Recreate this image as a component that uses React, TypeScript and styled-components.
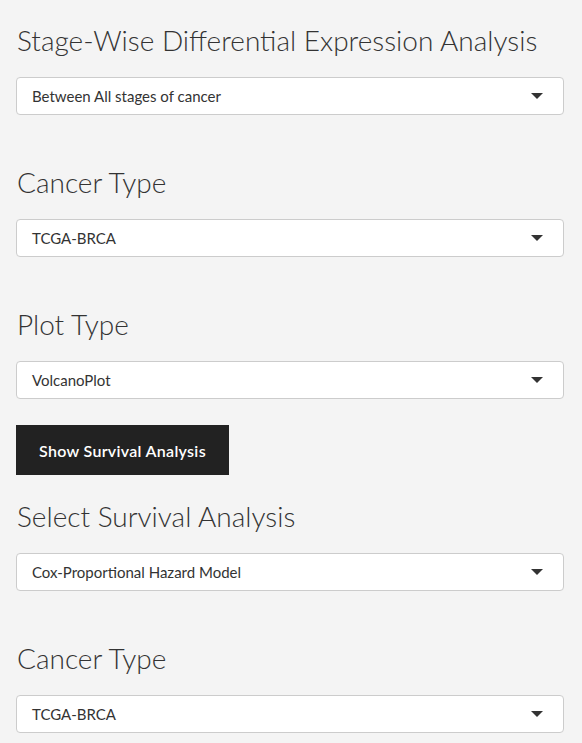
import React from 'react';
import styled, { createGlobalStyle } from 'styled-components';

const GlobalStyle = createGlobalStyle`
  html, body {
    margin: 0;
    padding: 0;
    background-color: #f4f4f4;
  }
  body {
    font-family: 'Lato', 'Noto Sans', sans-serif;
    color: #333;
  }
`;

const StyledPage = styled.div`
  width: 582px;
  box-sizing: border-box;
  padding: 0 18px 0 16px;
  display: flex;
  flex-direction: column;

  & > div:first-child h3 {
    margin-top: 23px;
  }
`;

const StyledTitle = styled.h3`
  font-family: 'Lato', 'Noto Sans', sans-serif;
  font-weight: 300;
  font-size: 28px;
  line-height: 35px;
  color: #333;
  white-space: nowrap;
  margin: 24px 0 19px 1px;
`;

const StyledSelect = styled.div`
  height: 38px;
  box-sizing: border-box;
  background-color: #fff;
  border: 1px solid #ccc;
  border-radius: 4px;
  display: flex;
  align-items: center;
  justify-content: space-between;
  padding: 0 20px 0 15px;
  font-size: 15px;
  color: #333;
`;

const StyledCaret = styled.span`
  width: 0;
  height: 0;
  border-left: 6px solid transparent;
  border-right: 6px solid transparent;
  border-top: 6px solid #333;
`;

const StyledSection = styled.div`
  display: flex;
  flex-direction: column;
  margin-bottom: 26px;
`;

const StyledButton = styled.button`
  align-self: flex-start;
  height: 50px;
  width: 213px;
  border: none;
  border-radius: 0;
  background-color: #222;
  color: #fff;
  font-family: 'Lato', 'Noto Sans', sans-serif;
  font-weight: 600;
  font-size: 16px;
  letter-spacing: 0.3px;
  margin: 0;
  padding: 0;
`;

const Select = ({ value }: { value: string }) => (
  <StyledSelect>
    <span>{value}</span>
    <StyledCaret />
  </StyledSelect>
);

const App = () => {
  return (
    <>
      <GlobalStyle />
      <StyledPage>
        <StyledSection>
          <StyledTitle>Stage-Wise Differential Expression Analysis</StyledTitle>
          <Select value='Between All stages of cancer' />
        </StyledSection>
        <StyledSection>
          <StyledTitle>Cancer Type</StyledTitle>
          <Select value='TCGA-BRCA' />
        </StyledSection>
        <StyledSection>
          <StyledTitle>Plot Type</StyledTitle>
          <Select value='VolcanoPlot' />
        </StyledSection>
        <StyledButton>Show Survival Analysis</StyledButton>
        <StyledSection>
          <StyledTitle>Select Survival Analysis</StyledTitle>
          <Select value='Cox-Proportional Hazard Model' />
        </StyledSection>
        <StyledSection>
          <StyledTitle>Cancer Type</StyledTitle>
          <Select value='TCGA-BRCA' />
        </StyledSection>
      </StyledPage>
    </>
  );
};

export default App;
